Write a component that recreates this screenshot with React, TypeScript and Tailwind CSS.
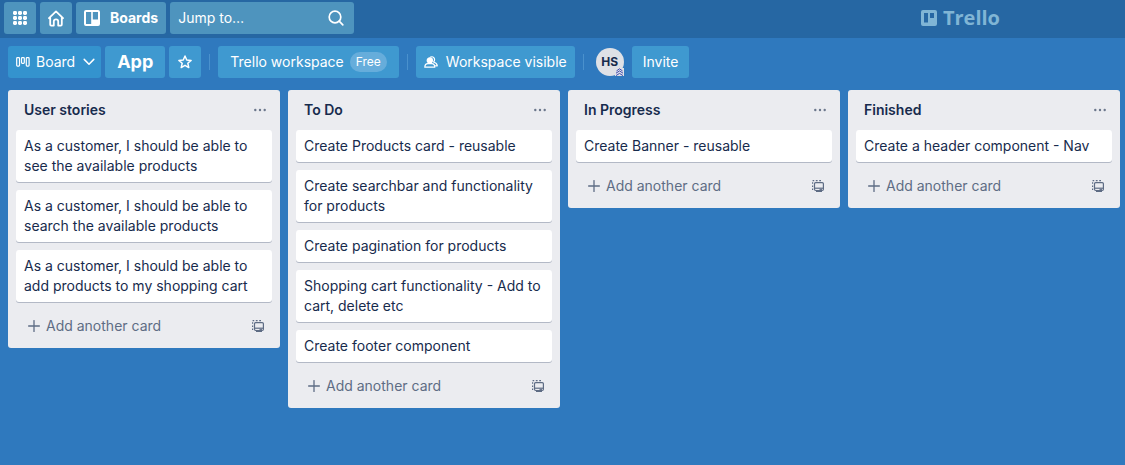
import React from "react";

type Column = { title: string; cards: string[] };

const columns: Column[] = [
  {
    title: "User stories",
    cards: [
      "As a customer, I should be able to see the available products",
      "As a customer, I should be able to search the available products",
      "As a customer, I should be able to add products to my shopping cart",
    ],
  },
  {
    title: "To Do",
    cards: [
      "Create Products card - reusable",
      "Create searchbar and functionality for products",
      "Create pagination for products",
      "Shopping cart functionality - Add to cart, delete etc",
      "Create footer component",
    ],
  },
  { title: "In Progress", cards: ["Create Banner - reusable"] },
  { title: "Finished", cards: ["Create a header component - Nav"] },
];

function AppsIcon() {
  const steps = [1, 6, 11];
  return (
    <svg viewBox="0 0 16 16" className="size-4" fill="currentColor" aria-hidden="true">
      {steps.map((y) =>
        steps.map((x) => <rect key={`${x}-${y}`} x={x} y={y} width="4" height="4" rx="1.4" />)
      )}
    </svg>
  );
}

function HomeIcon() {
  return (
    <svg viewBox="0 0 16 17" className="h-[17px] w-4" fill="none" stroke="currentColor" strokeWidth="1.8" strokeLinejoin="round" strokeLinecap="round" aria-hidden="true">
      <path d="M1 8.2 8 1.4l7 6.8M2.2 7.4v7.2c0 .6.4 1 1 1h2.6v-4a2.2 2.2 0 0 1 4.4 0v4h2.6c.6 0 1-.4 1-1V7.4" />
    </svg>
  );
}

function BoardsIcon() {
  return (
    <svg viewBox="0 0 16 16" className="size-4" fill="currentColor" fillRule="evenodd" aria-hidden="true">
      <path d="M2 0h12a2 2 0 0 1 2 2v12a2 2 0 0 1-2 2H2a2 2 0 0 1-2-2V2a2 2 0 0 1 2-2Zm0 2v12h5.200V2H2Zm6.800 0v7.500H14V2H8.800Z" />
    </svg>
  );
}

function TrelloMark() {
  return (
    <svg viewBox="0 0 16 16" className="size-4" fill="currentColor" fillRule="evenodd" aria-hidden="true">
      <path d="M2 0h12a2 2 0 0 1 2 2v12a2 2 0 0 1-2 2H2a2 2 0 0 1-2-2V2a2 2 0 0 1 2-2Zm1 3v9.500h4V3H3Zm6 0v5h4V3H9Z" />
    </svg>
  );
}

function BoardIcon() {
  return (
    <svg viewBox="0 0 14 10" className="h-[10px] w-[14px]" fill="none" stroke="currentColor" strokeWidth="1.2" aria-hidden="true">
      <rect x=".7" y=".7" width="2.800" height="8.400" rx=".8" />
      <rect x="5.500" y=".7" width="2.800" height="5.600" rx=".8" />
      <rect x="10.300" y=".7" width="2.800" height="8.400" rx=".8" />
    </svg>
  );
}

function ChevronIcon() {
  return (
    <svg viewBox="0 0 12 8" className="h-2 w-3" fill="none" stroke="currentColor" strokeWidth="1.5" strokeLinecap="round" strokeLinejoin="round" aria-hidden="true">
      <path d="m1.200 1.400 4.800 4.800 4.800-4.800" />
    </svg>
  );
}

function StarIcon() {
  return (
    <svg viewBox="0 0 24 24" className="size-4" fill="none" stroke="currentColor" strokeWidth="2.200" strokeLinejoin="round" aria-hidden="true">
      <path d="m12 3 2.600 6 6.600.6-5 4.300 1.500 6.500L12 17l-5.700 3.400 1.500-6.500-5-4.300 6.600-.6L12 3Z" />
    </svg>
  );
}

function SearchIcon() {
  return (
    <svg viewBox="0 0 16 16" className="size-4" fill="none" stroke="currentColor" strokeWidth="1.700" strokeLinecap="round" aria-hidden="true">
      <circle cx="7" cy="7" r="5.800" />
      <path d="m11.200 11.200 3.600 3.600" />
    </svg>
  );
}

function PeopleIcon() {
  return (
    <svg viewBox="0 0 14 12" className="h-3 w-[14px]" fill="none" stroke="currentColor" strokeWidth="1.200" strokeLinecap="round" strokeLinejoin="round" aria-hidden="true">
      <circle cx="5.800" cy="4.400" r="2.600" fill="currentColor" />
      <path d="M.8 11.200c.1-2.300 1.400-3.500 3-3.500h4c1.700 0 2.900 1.200 3 3.500H.8Z" />
      <path d="M6.600 1c2.800-1 4.400 1.300 3.800 3.500-.2.700-.4 1.100-.8 1.500 2.200.6 3.500 1.900 3.700 3.800h-1.800" />
    </svg>
  );
}

function DotsIcon() {
  return (
    <svg viewBox="0 0 14 4" className="h-1 w-[14px]" fill="currentColor" aria-hidden="true">
      <circle cx="2.300" cy="2" r="1.200" />
      <circle cx="7" cy="2" r="1.200" />
      <circle cx="11.700" cy="2" r="1.200" />
    </svg>
  );
}

function PlusIcon() {
  return (
    <svg viewBox="0 0 12 12" className="size-3" fill="none" stroke="currentColor" strokeWidth="1.300" strokeLinecap="round" aria-hidden="true">
      <path d="M6 .6v10.800M.6 6h10.800" />
    </svg>
  );
}

function TemplateIcon() {
  return (
    <svg viewBox="0 0 12 12" className="size-3" fill="none" stroke="currentColor" strokeWidth="1.200" aria-hidden="true">
      <rect x="2.500" y="2.600" width="8.900" height="7.900" rx="1.200" />
      <path d="M2.500 8.200h8.900" />
      <path d="M7.500 9.400h2.500M4 11.500h6" strokeWidth="1" />
      <path d="M.6 10V8.600M.6 7V5.400M.6 3.800V2.200M.6.700h1.600M3.800.7h1.800M7.200.7H9" />
    </svg>
  );
}

function RankIcon() {
  return (
    <svg viewBox="0 0 9 8" className="h-2 w-[9px]" fill="none" stroke="#3f4bb0" strokeWidth="1" aria-hidden="true">
      <path d="M1.500 2.900 4.500.8l3 2.100M1 5.200l3.500-2.300L8 5.200M1 7.600l3.500-2.200L8 7.600" />
    </svg>
  );
}

function Divider() {
  return <span className="mx-1 h-4 w-px shrink-0 bg-[#4a91cd]" />;
}

const headerButton = "flex h-8 shrink-0 items-center justify-center rounded-[3px] bg-[#4e94be] text-white";
const boardButton = "flex h-8 shrink-0 items-center rounded-[3px] bg-[#3f99d0] text-white";

function TopBar() {
  return (
    <header className="flex h-[38px] items-center gap-1 bg-[#2667a3] px-1 pb-0.5">
      <button className={`${headerButton} w-8`} aria-label="Apps"><AppsIcon /></button>
      <a href="#home" className={`${headerButton} w-8`} aria-label="Home"><HomeIcon /></a>
      <button className={`${headerButton} gap-2.5 px-2 font-bold`}>
        <BoardsIcon />
        Boards
      </button>
      <label className={`${headerButton} w-[184px] px-2`}>
        <input type="text" aria-label="Jump to" placeholder="Jump to…" className="min-w-0 flex-1 bg-transparent text-white outline-none placeholder:text-white placeholder:opacity-100" />
        <span className="pr-0.5"><SearchIcon /></span>
      </label>
      <a href="#trello" className="mr-[121px] ml-auto flex items-center gap-1.5 text-[#80b5d5]">
        <TrelloMark />
        <span className="font-['Open_Sans',sans-serif] text-xl leading-5 font-bold">Trello</span>
      </a>
    </header>
  );
}

function BoardBar() {
  return (
    <nav className="flex items-center gap-1 p-2" aria-label="Board">
      <button className="flex h-8 shrink-0 items-center gap-1.5 rounded-[3px] bg-[#3493ce] pr-1.5 pl-2 text-white">
        <BoardIcon />
        Board
        <span className="pl-0.5"><ChevronIcon /></span>
      </button>
      <h1 className={`${boardButton} px-3 text-[18px] font-bold`}>App</h1>
      <button className={`${boardButton} w-8 justify-center`} aria-label="Star board"><StarIcon /></button>
      <Divider />
      <button className={`${boardButton} gap-1.5 px-3`}>
        Trello workspace
        <span className="rounded-full bg-[#66addb] px-1.5 text-xs leading-5">Free</span>
      </button>
      <Divider />
      <button className={`${boardButton} gap-2 px-2`}>
        <PeopleIcon />
        Workspace visible
      </button>
      <Divider />
      <button className="relative ml-1 flex size-7 shrink-0 items-center justify-center rounded-full bg-[#dfe1e6] text-xs font-bold text-[#172b4d]">
        HS
        <span className="absolute right-0 bottom-0 bg-[#dfe1e6]"><RankIcon /></span>
      </button>
      <button className={`${boardButton} ml-1 px-[11px]`}>Invite</button>
    </nav>
  );
}

function List({ title, cards }: Column) {
  return (
    <section className="w-[272px] shrink-0 rounded-[3px] bg-[#ebecf0] px-2 pt-2 pb-1.5">
      <div className="flex h-6 items-center justify-between pr-[5px] pl-2">
        <h2 className="font-semibold">{title}</h2>
        <button className="text-[#6b778c]" aria-label={`${title} list actions`}><DotsIcon /></button>
      </div>
      <ul className="mt-2 flex flex-col gap-2">
        {cards.map((card) => (
          <li key={card} className="rounded-[3px] bg-white px-2 py-1.5 shadow-[0_1px_0_#b3b9c6]">{card}</li>
        ))}
      </ul>
      <div className="mt-2 flex h-8 items-center justify-between px-2 text-[#5e6c84]">
        <button className="flex items-center gap-1.5 pl-1"><PlusIcon />Add another card</button>
        <button aria-label="Create from template"><TemplateIcon /></button>
      </div>
    </section>
  );
}

export default function App() {
  return (
    <div className="min-h-screen overflow-x-auto bg-[#2f79be] font-['Inter',sans-serif] text-sm leading-5 text-[#172b4d]">
      <TopBar />
      <BoardBar />
      <main className="flex items-start gap-2 px-2 pt-1 pb-2">
        {columns.map((column) => (
          <List key={column.title} {...column} />
        ))}
      </main>
    </div>
  );
}
